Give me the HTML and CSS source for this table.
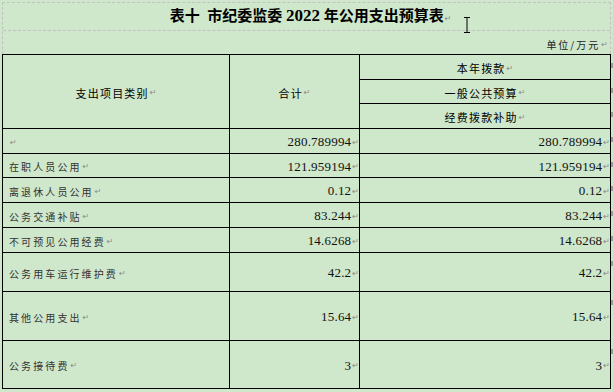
FILE: index.html
```html
<!DOCTYPE html>
<html lang="zh">
<head>
<meta charset="utf-8">
<link rel="stylesheet" href="styles.css">
</head>
<body>
<div class="page">
  <div class="head">
    <div class="title-row">
      <h1 class="title">表十&nbsp;&nbsp;市纪委监委 <span class="yr">2022</span> 年公用支出预算表<span class="pm">↵</span></h1>
    </div>
    <div class="unit-row"><span class="unit">单位/万元</span><span class="pm">↵</span></div>
  </div>
  <div class="tablewrap">
    <div class="grid">
      <div class="c hd h-span">支出项目类别<span class="pm">↵</span></div>
      <div class="c hd h-span">合计<span class="pm">↵</span></div>
      <div class="c hd">本年拨款<span class="pm">↵</span></div>
      <div class="c hd">一般公共预算<span class="pm">↵</span></div>
      <div class="c hd">经费拨款补助<span class="pm">↵</span></div>

      <div class="c lbl"><span class="pm">↵</span></div>
      <div class="c num">280.789994<span class="pm">↵</span></div>
      <div class="c num">280.789994<span class="pm">↵</span></div>

      <div class="c lbl">在职人员公用<span class="pm">↵</span></div>
      <div class="c num">121.959194<span class="pm">↵</span></div>
      <div class="c num">121.959194<span class="pm">↵</span></div>

      <div class="c lbl">离退休人员公用<span class="pm">↵</span></div>
      <div class="c num">0.12<span class="pm">↵</span></div>
      <div class="c num">0.12<span class="pm">↵</span></div>

      <div class="c lbl">公务交通补贴<span class="pm">↵</span></div>
      <div class="c num">83.244<span class="pm">↵</span></div>
      <div class="c num">83.244<span class="pm">↵</span></div>

      <div class="c lbl">不可预见公用经费<span class="pm">↵</span></div>
      <div class="c num">14.6268<span class="pm">↵</span></div>
      <div class="c num">14.6268<span class="pm">↵</span></div>

      <div class="c lbl">公务用车运行维护费<span class="pm">↵</span></div>
      <div class="c num">42.2<span class="pm">↵</span></div>
      <div class="c num">42.2<span class="pm">↵</span></div>

      <div class="c lbl">其他公用支出<span class="pm">↵</span></div>
      <div class="c num">15.64<span class="pm">↵</span></div>
      <div class="c num">15.64<span class="pm">↵</span></div>

      <div class="c lbl">公务接待费<span class="pm">↵</span></div>
      <div class="c num">3<span class="pm">↵</span></div>
      <div class="c num">3<span class="pm">↵</span></div>
    </div>
    <div class="marks">
      <span class="mk"></span><span class="mk"></span><span class="mk"></span>
      <span class="mk"></span><span class="mk"></span><span class="mk"></span>
      <span class="mk"></span><span class="mk"></span><span class="mk"></span>
      <span class="mk"></span><span class="mk"></span>
    </div>
  </div>
  <svg class="ibeam" width="8" height="16" viewBox="0 0 8 16">
    <path d="M1 0.5H7M4 0.5V15.5M1 15.5H7" stroke="#000" stroke-width="1" fill="none"/>
  </svg>
</div>
</body>
</html>
```

FILE: styles.css
```css
html, body {
  margin: 0;
  padding: 0;
  background: #cfe7ca;
}
body {
  width: 613px;
  height: 392px;
  overflow: hidden;
  font-family: "Noto Sans CJK SC", sans-serif;
  color: #222;
}
.page {
  position: relative;
  padding: 2px 0 0 2px;
}
.head {
  width: 607px;
  border: 1px dashed #c2c2c2;
  border-bottom: none;
}
.title-row {
  height: 27px;
  border-bottom: 1px dashed #c2c2c2;
  display: flex;
  align-items: center;
  justify-content: center;
}
.title {
  margin: 0 0 0 8px;
  font-family: "Liberation Serif", "Noto Sans CJK SC", serif;
  font-weight: bold;
  font-size: 15px;
  line-height: 20px;
  color: #000;
  padding-top: 2px;
}
.yr {
  font-size: 17px;
}
.unit-row {
  height: 23px;
  display: flex;
  align-items: center;
  justify-content: flex-end;
  padding-right: 2px;
  padding-top: 3px;
  box-sizing: border-box;
}
.unit {
  font-size: 10px;
  letter-spacing: 2px;
  color: #222;
}
.tablewrap {
  display: flex;
}
.grid {
  display: grid;
  grid-template-columns: 226px 129px 250px;
  grid-template-rows: 24px 23px 24px 24px 23px 24px 24px 24px 38px 48px 47px;
  gap: 1px;
  background: #000;
  border: 1px solid #000;
}
.c {
  background: #cfe7ca;
  display: flex;
  align-items: center;
  padding-top: 2px;
  box-sizing: border-box;
  white-space: nowrap;
}
.hd {
  justify-content: center;
  font-size: 11px;
  letter-spacing: 1.2px;
  color: #000;
}
.h-span {
  grid-row: span 3;
}
.lbl {
  padding-left: 6px;
  font-size: 10px;
  letter-spacing: 2.1px;
  color: #333;
}
.num {
  justify-content: flex-end;
  font-family: "Liberation Serif", serif;
  font-size: 13px;
  letter-spacing: 0.2px;
  color: #111;
}
.pm {
  color: #8a8a8a;
  font-family: "DejaVu Sans", sans-serif;
  font-size: 8px;
  font-weight: normal;
  letter-spacing: 0;
  margin-left: 1px;
}
.marks {
  display: grid;
  grid-template-rows: 24px 23px 24px 24px 23px 24px 24px 24px 38px 48px 47px;
  row-gap: 1px;
  padding-top: 1px;
  width: 2px;
}
.mk {
  display: block;
  width: 2px;
  height: 5px;
  margin-top: 8px;
  background: #9a9a9a;
}
.ibeam {
  position: absolute;
  left: 463px;
  top: 17px;
}
```
